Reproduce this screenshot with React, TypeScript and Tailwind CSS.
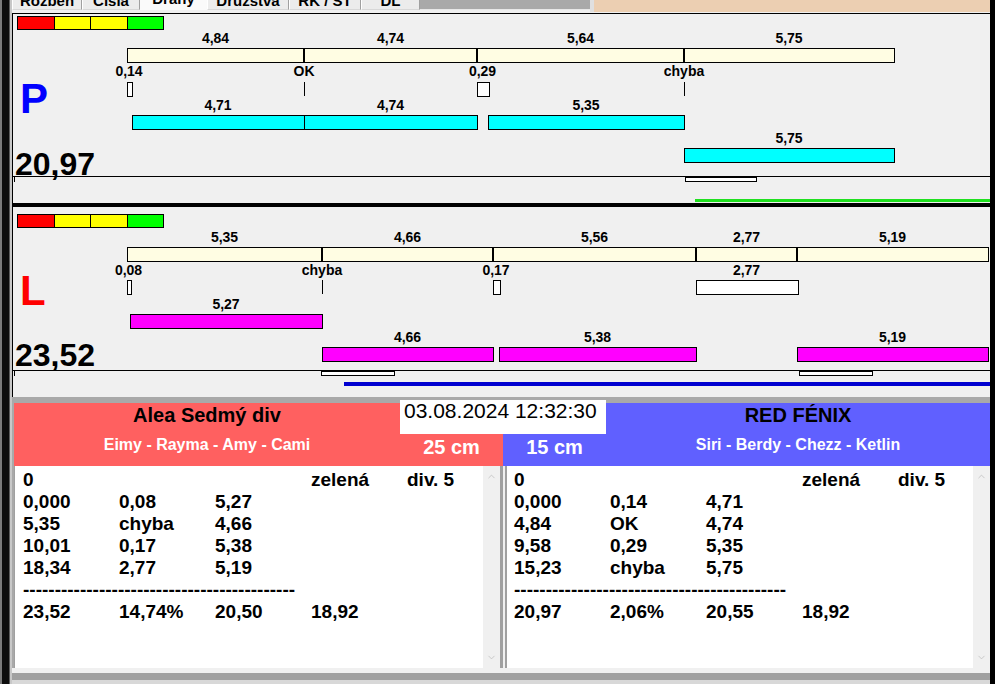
import React from 'react';
import { ChevronUp, ChevronDown } from 'lucide-react';

type Seg = { x1: number; x2: number; label: string };
type Mark = { x: number; w: number; label: string };
type Run = { x1: number; x2: number; y: number; label: string };

interface Lane {
  top: number; // page y of panel content
  letter: string;
  letterClass: string;
  total: string;
  squaresY: number;
  beigeY: number;
  beige: Seg[];
  markY: number;
  marks: Mark[];
  runClass: string;
  runs: Run[];
  letterY: number;
  totalY: number;
  lineY: number;
  ticks: { x1: number; x2: number }[];
  trace: { x1: number; y: number; h: number; cls: string };
}

const X0 = 13; // page x of panel content

const laneP: Lane = {
  top: 14,
  letter: 'P',
  letterClass: 'text-[#0000ff]',
  total: '20,97',
  squaresY: 16,
  beigeY: 48,
  beige: [
    { x1: 127, x2: 304, label: '4,84' },
    { x1: 304, x2: 477, label: '4,74' },
    { x1: 477, x2: 684, label: '5,64' },
    { x1: 684, x2: 894, label: '5,75' },
  ],
  markY: 82,
  marks: [
    { x: 127, w: 4, label: '0,14' },
    { x: 304, w: 0, label: 'OK' },
    { x: 477, w: 11, label: '0,29' },
    { x: 684, w: 0, label: 'chyba' },
  ],
  runClass: 'bg-[#00ffff]',
  runs: [
    { x1: 132, x2: 304, y: 115, label: '4,71' },
    { x1: 304, x2: 477, y: 115, label: '4,74' },
    { x1: 488, x2: 684, y: 115, label: '5,35' },
    { x1: 684, x2: 894, y: 148, label: '5,75' },
  ],
  letterY: 78,
  totalY: 148,
  lineY: 176,
  ticks: [{ x1: 685, x2: 757 }],
  trace: { x1: 695, y: 199, h: 3, cls: 'bg-[#1fe01f]' },
};

const laneL: Lane = {
  top: 207,
  letter: 'L',
  letterClass: 'text-[#ff0000]',
  total: '23,52',
  squaresY: 214,
  beigeY: 247,
  beige: [
    { x1: 127, x2: 322, label: '5,35' },
    { x1: 322, x2: 493, label: '4,66' },
    { x1: 493, x2: 696, label: '5,56' },
    { x1: 696, x2: 797, label: '2,77' },
    { x1: 797, x2: 988, label: '5,19' },
  ],
  markY: 280,
  marks: [
    { x: 127, w: 3, label: '0,08' },
    { x: 322, w: 0, label: 'chyba' },
    { x: 493, w: 6, label: '0,17' },
    { x: 696, w: 101, label: '2,77' },
  ],
  runClass: 'bg-[#ff00ff]',
  runs: [
    { x1: 130, x2: 322, y: 314, label: '5,27' },
    { x1: 322, x2: 493, y: 347, label: '4,66' },
    { x1: 499, x2: 696, y: 347, label: '5,38' },
    { x1: 797, x2: 988, y: 347, label: '5,19' },
  ],
  letterY: 270,
  totalY: 339,
  lineY: 370,
  ticks: [
    { x1: 321, x2: 395 },
    { x1: 799, x2: 873 },
  ],
  trace: { x1: 344, y: 382, h: 4, cls: 'bg-[#0000d0]' },
};

const SQUARES = [17, 54, 90, 127, 163];
const SQUARE_COLORS = ['bg-[#ff0000]', 'bg-[#ffff00]', 'bg-[#ffff00]', 'bg-[#00ff00]'];

function LanePanel({ lane, height, topBorder }: { lane: Lane; height: number; topBorder?: boolean }) {
  const at = (x: number, y: number) => ({ left: x - X0, top: y - lane.top });
  const first = lane.beige[0].x1;
  const last = lane.beige[lane.beige.length - 1].x2;

  return (
    <div
      className={`relative w-full bg-[#f0f0f0] border-l border-black overflow-hidden ${topBorder ? 'border-t' : ''}`}
      style={{ height }}
    >
      {/* lights */}
      {SQUARE_COLORS.map((c, i) => (
        <div
          key={i}
          className={`absolute h-[14px] border border-black ${c}`}
          style={{ ...at(SQUARES[i], lane.squaresY), width: SQUARES[i + 1] - SQUARES[i] + 1 }}
        />
      ))}

      {/* split bar */}
      <div
        className="absolute h-[15px] border border-black bg-[#fffde3]"
        style={{ ...at(first, lane.beigeY), width: last - first + 1 }}
      />
      {lane.beige.slice(1).map((s) => (
        <div key={s.x1} className="absolute w-[2px] h-[15px] bg-black" style={at(s.x1 - 1, lane.beigeY)} />
      ))}
      {lane.beige.map((s) => (
        <div
          key={'l' + s.x1}
          className="absolute text-center text-[14px] font-bold leading-none text-black"
          style={{ ...at(s.x1, lane.beigeY - 17), width: s.x2 - s.x1 }}
        >
          {s.label}
        </div>
      ))}

      {/* reaction marks */}
      {lane.marks.map((m) => (
        <React.Fragment key={'m' + m.x}>
          <div
            className="absolute w-[80px] text-center text-[14px] font-bold leading-none text-black"
            style={at(m.x + m.w / 2 - 40, lane.beigeY + 16)}
          >
            {m.label}
          </div>
          {m.w > 0 ? (
            <div
              className="absolute h-[15px] border border-black bg-white"
              style={{ ...at(m.x, lane.markY), width: m.w + 2 }}
            />
          ) : (
            <div className="absolute w-[1px] h-[14px] bg-black" style={at(m.x, lane.markY)} />
          )}
        </React.Fragment>
      ))}

      {/* runs */}
      {lane.runs.map((r) => (
        <React.Fragment key={'r' + r.x1}>
          <div
            className={`absolute h-[15px] border border-black ${lane.runClass}`}
            style={{ ...at(r.x1, r.y), width: r.x2 - r.x1 + 1 }}
          />
          <div
            className="absolute text-center text-[14px] font-bold leading-none text-black"
            style={{ ...at(r.x1, r.y - 17), width: r.x2 - r.x1 }}
          >
            {r.label}
          </div>
        </React.Fragment>
      ))}

      <div className={`absolute text-[42px] font-bold leading-none ${lane.letterClass}`} style={at(20, lane.letterY)}>
        {lane.letter}
      </div>
      <div className="absolute text-[32px] font-bold leading-none text-black" style={at(15, lane.totalY)}>
        {lane.total}
      </div>

      {/* time line */}
      <div className="absolute left-0 right-0 h-[1px] bg-black" style={{ top: lane.lineY - lane.top }} />
      <div className="absolute w-[1px] h-[6px] bg-black" style={at(14, lane.lineY)} />
      {lane.ticks.map((t) => (
        <div
          key={'t' + t.x1}
          className="absolute h-[5px] border border-black bg-white"
          style={{ ...at(t.x1, lane.lineY + 1), width: t.x2 - t.x1 }}
        />
      ))}
      <div
        className={`absolute right-0 ${lane.trace.cls}`}
        style={{ ...at(lane.trace.x1, lane.trace.y), height: lane.trace.h }}
      />
    </div>
  );
}

const TABS = [
  { label: 'Rozběh', w: 70 },
  { label: 'Čísla', w: 58 },
  { label: 'Dráhy', w: 67, active: true },
  { label: 'Družstva', w: 82 },
  { label: 'RK / ST', w: 72 },
  { label: 'DL', w: 59 },
];

function Tabs() {
  return (
    <div className="h-[13px] flex bg-[#f0f0f0]">
      {TABS.map((t) => (
        <div
          key={t.label}
          className={`h-[10px] overflow-hidden flex justify-center shrink-0 ${
            t.active ? 'bg-[#fafafa]' : 'bg-[#ececec] border-l border-white border-r border-r-[#a0a0a0] border-b border-b-[#d8d8d8]'
          }`}
          style={{ width: t.w }}
        >
          <span className={`text-[15px] font-bold leading-none text-black whitespace-nowrap ${t.active ? '-mt-[9px]' : '-mt-[7px]'}`}>
            {t.label}
          </span>
        </div>
      ))}
      <div className="w-[170px] h-[10px] bg-[#a9a9a9] border-b border-[#e8e8e8] shrink-0" />
      <div className="w-[4px] h-[12px] bg-[#e0e0e0] shrink-0" />
      <div className="flex-1 h-[12px] bg-[#eccfb2]" />
    </div>
  );
}

const LEFT_ROWS = [
  ['0', '', '', 'zelená', 'div. 5'],
  ['0,000', '0,08', '5,27'],
  ['5,35', 'chyba', '4,66'],
  ['10,01', '0,17', '5,38'],
  ['18,34', '2,77', '5,19'],
  null,
  ['23,52', '14,74%', '20,50', '18,92'],
];

const RIGHT_ROWS = [
  ['0', '', '', 'zelená', 'div. 5'],
  ['0,000', '0,14', '4,71'],
  ['4,84', 'OK', '4,74'],
  ['9,58', '0,29', '5,35'],
  ['15,23', 'chyba', '5,75'],
  null,
  ['20,97', '2,06%', '20,55', '18,92'],
];

const DASHES = '-'.repeat(43);

function ListBox({ rows, padLeft }: { rows: (string[] | null)[]; padLeft: string }) {
  return (
    <div className="flex-1 min-w-0 flex bg-white h-full">
      <div className={`flex-1 min-w-0 overflow-hidden pt-[3px] ${padLeft}`}>
        {rows.map((r, i) =>
          r ? (
            <div key={i} className="grid grid-cols-[96px_96px_96px_96px_96px] h-[22px] leading-[22px] text-[19px] font-bold text-black">
              {r.map((c, j) => (
                <span key={j} className="whitespace-nowrap">
                  {c}
                </span>
              ))}
            </div>
          ) : (
            <div key={i} className="h-[22px] leading-[22px] text-[19px] font-bold text-black whitespace-nowrap">
              {DASHES}
            </div>
          )
        )}
      </div>
      <div className="w-[17px] shrink-0 bg-[#f0f0f0] flex flex-col items-center justify-between py-[5px]">
        <ChevronUp size={11} strokeWidth={1.5} className="text-[#b8b8b8]" />
        <ChevronDown size={11} strokeWidth={1.5} className="text-[#b8b8b8]" />
      </div>
    </div>
  );
}

function Results() {
  return (
    <div className="flex-1 flex flex-col bg-[#a9a9a9] pt-[6px]">
      <div className="h-[63px] flex pl-[2px]">
        <div className="w-[489px] flex bg-[#ff6060]">
          <div className="w-[386px] flex flex-col items-center pt-[2px]">
            <div className="text-[20px] font-bold leading-none text-black">Alea Sedmý div</div>
            <div className="mt-[12px] text-[16px] font-bold leading-none text-white">Eimy - Rayma - Amy - Cami</div>
          </div>
          <div className="flex-1 pt-[34px] text-center text-[20px] font-bold leading-none text-white">25 cm</div>
        </div>
        <div className="flex-1 flex bg-[#6060ff]">
          <div className="w-[103px] pt-[34px] text-center text-[20px] font-bold leading-none text-white">15 cm</div>
          <div className="flex-1 flex flex-col items-center pt-[2px]">
            <div className="text-[20px] font-bold leading-none text-black">RED FÉNIX</div>
            <div className="mt-[12px] text-[16px] font-bold leading-none text-white">Siri - Berdy - Chezz - Ketlin</div>
          </div>
        </div>
      </div>
      <div className="h-[202px] flex pl-[2px]">
        <div className="w-[486px] flex border-l border-[#a0a0a0] bg-white">
          <ListBox rows={LEFT_ROWS} padLeft="pl-[8px]" />
        </div>
        <div className="w-[7px] shrink-0 flex">
          <div className="w-[3px] bg-[#a0a0a0]" />
          <div className="w-[2px] bg-[#f0f0f0]" />
          <div className="w-[2px] bg-[#a0a0a0]" />
        </div>
        <div className="flex-1 min-w-0 flex">
          <ListBox rows={RIGHT_ROWS} padLeft="pl-[7px]" />
        </div>
      </div>
      <div className="h-[5px] bg-[#f0f0f0]" />
      <div className="h-[7px] bg-[#a0a0a0]" />
      <div className="h-[4px] bg-[#d8d8d8]" />
    </div>
  );
}

export default function App() {
  return (
    <div className="relative w-[995px] h-[684px] flex bg-black overflow-hidden font-['Liberation_Sans',Arial,sans-serif]">
      {/* window edge behind */}
      <div className="w-[12px] flex shrink-0">
        <div className="w-[2px] bg-[#7a7a7a]" />
        <div className="w-[7px] bg-[#0c0c0c]" />
        <div className="w-[1px] bg-[#5a5a5a]" />
        <div className="w-[2px] bg-[#c8c8c8]" />
      </div>

      <div className="w-[978px] flex flex-col shrink-0">
        <Tabs />
        <LanePanel lane={laneP} height={190} topBorder />
        <div className="h-[4px] bg-black" />
        <LanePanel lane={laneL} height={190} />
        <Results />
      </div>

      <div className="flex-1 bg-black" />

      {/* date / time box */}
      <div className="absolute left-[400px] top-[400px] w-[206px] h-[34px] bg-white pl-[4px] text-[21px] leading-none text-black whitespace-nowrap">
        03.08.2024 12:32:30
      </div>
    </div>
  );
}
